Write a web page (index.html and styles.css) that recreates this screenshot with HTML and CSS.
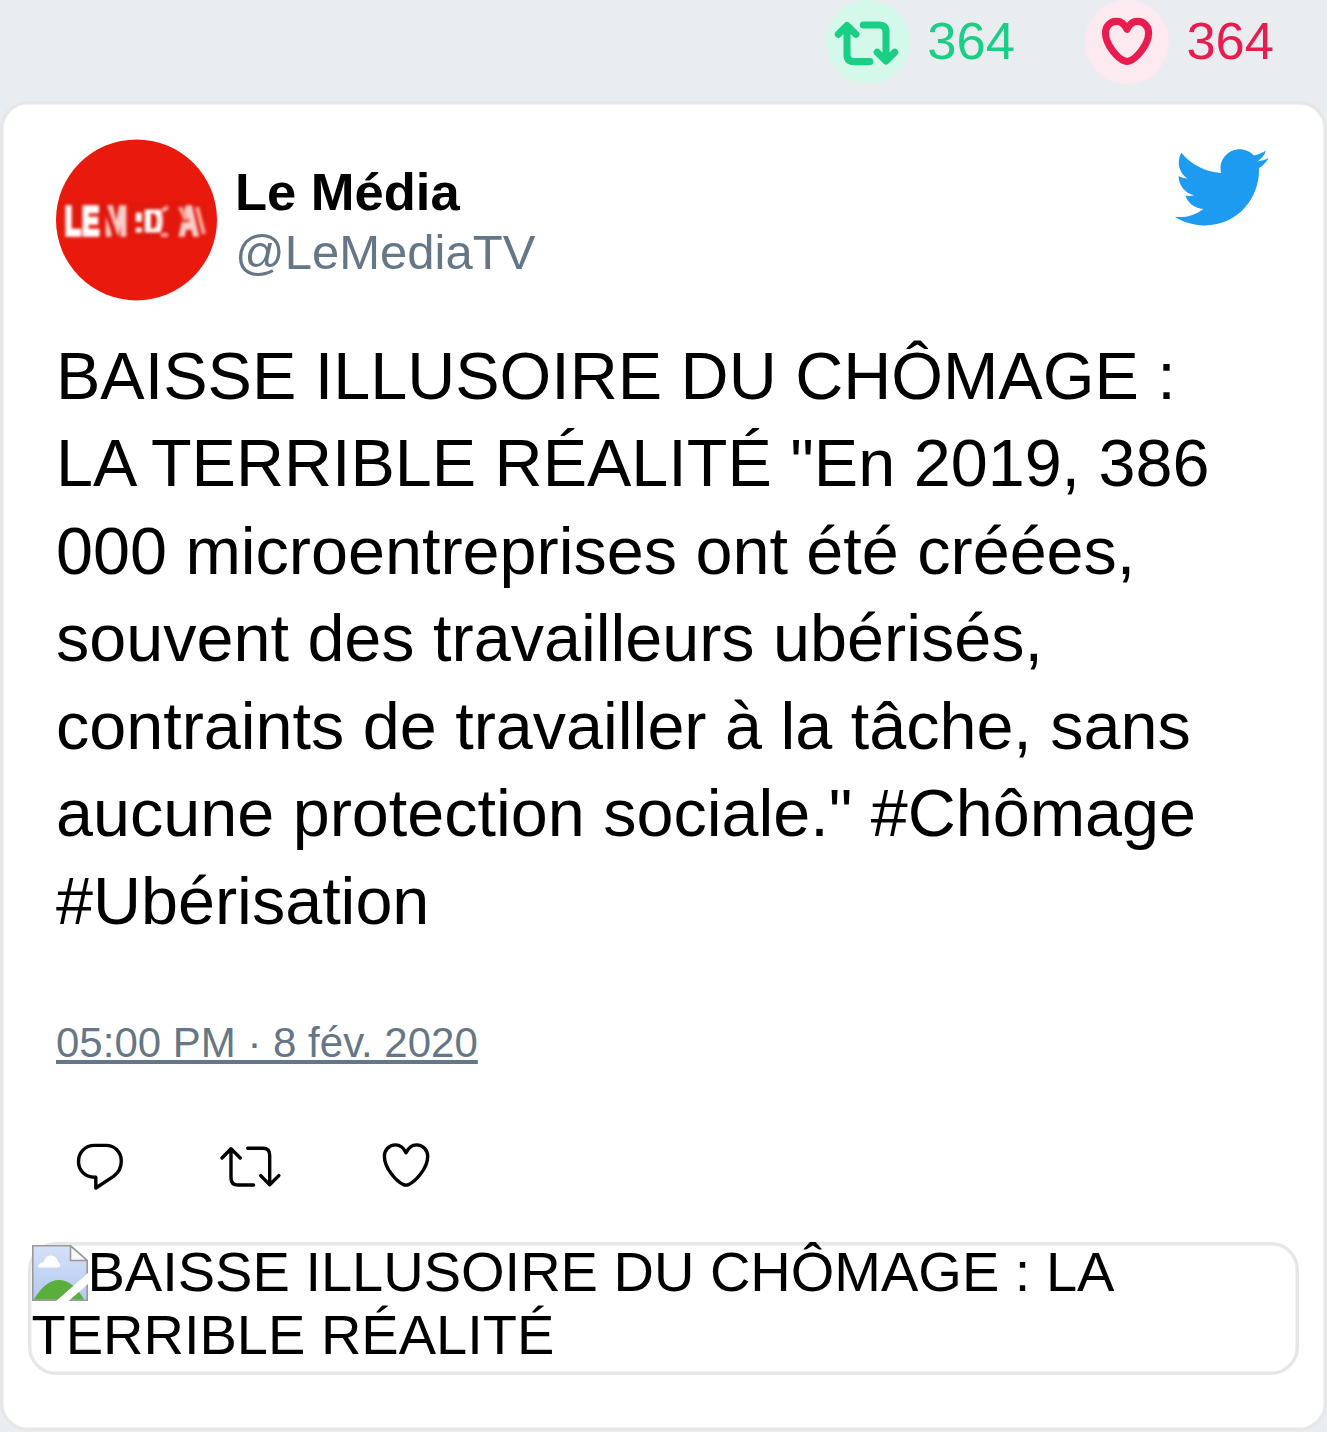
FILE: index.html
```html
<!DOCTYPE html>
<html lang="fr">
<head>
<meta charset="utf-8">
<title>Le Média</title>
<link rel="stylesheet" href="styles.css">
</head>
<body>
<div class="stats">
  <div class="stat stat-retweet">
    <span class="badge"><svg width="84" height="84" viewBox="826 0 84 84"><path d="M838.3 34.3L847 25.6L855.9 34.3M847 26V54.5Q847 61.6 854 61.6H869.8M863.3 25H879Q886 25 886 32V60M877.2 52.3L886 61L894.7 52.3"/></svg></span>
    <span>364</span>
  </div>
  <div class="stat stat-like">
    <span class="badge"><svg width="84" height="84" viewBox="1085 0 84 84"><path d="M1127 29.3C1124.5 24 1120.5 21.4 1116.5 21.4C1110 21.4 1105.5 26.5 1105.5 33C1105.5 45 1118 58.5 1124.5 60.9Q1127 61.8 1129.5 60.9C1136 58.5 1148.6 45 1148.6 33C1148.6 26.5 1144 21.4 1137.5 21.4C1133.5 21.4 1129.5 24 1127 29.3Z"/></svg></span>
    <span>364</span>
  </div>
</div>
<article class="card">
  <header class="head">
    <svg class="avatar" width="161" height="161" viewBox="56 139 161 161">
      <circle cx="136.5" cy="219.9" r="80.5" fill="#e9190d"/>
      <g class="logo">
        <rect x="64" y="202" width="142" height="37" fill="#d0170c" opacity=".3"/>
        <text transform="translate(65 235) scale(.65 1)" x="0 26 62 107 122 176">LEM:DA</text>
        <path class="cut" d="M104 204L116 238M134 235H160M143 207H160M178 202L186 222"/>
        <path class="glint" d="M180 207L186 220M197 207L204 234M162 211L168 207M161 235H168"/>
        <path class="tint" d="M104 204H130V238H104ZM160 204H206V238H160Z"/>
      </g>
    </svg>
    <div class="who">
      <div class="name">Le Média</div>
      <div class="handle">@LeMediaTV</div>
    </div>
    <svg class="bird" width="99" height="99" viewBox="0 0 24 24"><path d="M23.643 4.937c-.835.37-1.732.62-2.675.733.962-.576 1.7-1.49 2.048-2.578-.9.534-1.897.922-2.958 1.13-.85-.904-2.06-1.47-3.4-1.47-2.572 0-4.658 2.086-4.658 4.66 0 .364.042.718.12 1.06-3.873-.195-7.304-2.05-9.602-4.868-.4.69-.63 1.49-.63 2.342 0 1.616.823 3.043 2.072 3.878-.764-.025-1.482-.234-2.11-.583v.06c0 2.257 1.605 4.14 3.737 4.568-.392.106-.803.162-1.227.162-.3 0-.593-.028-.877-.082.593 1.85 2.313 3.198 4.352 3.234-1.595 1.25-3.604 1.995-5.786 1.995-.376 0-.747-.022-1.112-.065 2.062 1.323 4.51 2.093 7.14 2.093 8.57 0 13.255-7.098 13.255-13.254 0-.2-.005-.402-.014-.602.91-.658 1.7-1.477 2.323-2.41z"/></svg>
  </header>
  <p class="text">BAISSE ILLUSOIRE DU CHÔMAGE :<br>LA TERRIBLE RÉALITÉ "En 2019, 386<br>000 microentreprises ont été créées,<br>souvent des travailleurs ubérisés,<br>contraints de travailler à la tâche, sans<br>aucune protection sociale." #Chômage<br>#Ubérisation</p>
  <div class="date">05:00 PM · 8 fév. 2020</div>
  <div class="actions">
    <svg width="50" height="50" viewBox="75 1140 50 50"><path d="M94.5 1145.4H106C115 1145.4 121.3 1152.5 121.3 1161C121.3 1167 118.8 1172.6 113.5 1176.3L95.8 1188V1177.2H94.3C85 1177.2 78.5 1170.3 78.5 1161.4C78.5 1152.5 85 1145.4 94.5 1145.4Z"/></svg>
    <svg width="64" height="50" viewBox="219 1140 64 50"><path d="M222 1158L231 1148.7L240.2 1158M231 1149V1178Q231 1185 238 1185H253.5M247.7 1148.3H263Q269.7 1148.3 269.7 1155.3V1184M260.7 1175.6L269.7 1184.7L278.8 1175.6"/></svg>
    <svg width="50" height="50" viewBox="381 1140 50 50"><path d="M406 1152.8C403.5 1147.5 399.5 1144.9 395.5 1144.9C389 1144.9 384.4 1150 384.4 1156.5C384.4 1168.5 397 1182 403.5 1184.6Q406 1185.6 408.5 1184.6C415 1182 427.7 1168.5 427.7 1156.5C427.7 1150 423 1144.9 416.5 1144.9C412.5 1144.9 408.5 1147.5 406 1152.8Z"/></svg>
  </div>
  <div class="media"><div class="alt"><svg class="broken" width="56" height="56" viewBox="0 0 56 56">
      <defs><linearGradient id="sky" x2="0" y2="1"><stop offset="0" stop-color="#d5e1f8"/><stop offset="1" stop-color="#b3c9ef"/></linearGradient></defs>
      <path d="M.8.8H38.5L55.2 15.5V55.2H.8Z" fill="url(#sky)" stroke="#999" stroke-width="1.6"/>
      <path d="M6 22.5C6 19 9 17.2 11.5 17.2C13 12.5 16 10.5 19 10.5C23 10.5 25.5 13.5 26.2 17C29 18 28.5 22.5 26.5 22.5Z" fill="#fff"/>
      <path d="M2 54.4C9 42 18 35 27 35C36 35 45 42 52 54.4Z" fill="#5aae3b"/>
      <path d="M23 57L57 27V38L35.5 57Z" fill="#fff"/>
      <path d="M38.5.8V15.5H55.2Z" fill="#f8f8f8" stroke="#999" stroke-width="1.6"/>
    </svg>BAISSE ILLUSOIRE DU CHÔMAGE : LA<br>TERRIBLE RÉALITÉ</div></div>
</article>
</body>
</html>
```
FILE: styles.css
```css
* { box-sizing: border-box; }
body {
  margin: 0;
  height: 1432px;
  overflow: hidden;
  background: #e9edf0;
  color: #000;
  font-family: "Liberation Sans", Arial, sans-serif;
}
svg { display: block; flex: none; }
.stats {
  display: flex;
  justify-content: flex-end;
  gap: 70px;
  height: 101px;
  padding-right: 53px;
  font-size: 52.5px;
  line-height: 81px;
}
.stat { display: flex; gap: 17.5px; height: 83px; }
.badge { width: 84px; height: 84px; margin-top: -.5px; border-radius: 50%; }
.badge path { fill: none; stroke-width: 7.1; stroke-linecap: round; stroke-linejoin: round; }
.stat-retweet { color: #19cf86; }
.stat-retweet .badge { background: #d4f9ea; }
.stat-retweet path { stroke: #19cf86; }
.stat-like { color: #e81c4f; }
.stat-like .badge { background: #fdeaf0; }
.stat-like path { stroke: #e81c4f; }
.card {
  height: 1330px;
  border: 3px solid #e6e6e6;
  border-radius: 28px;
  box-shadow: inset 0 0 0 .5px #e6e6e6;
  background: #fff;
  padding: 35px 25px 0;
}
.head { display: flex; padding-left: 28px; height: 161px; }
.avatar { overflow: visible; }
.logo { font-size: 40px; font-weight: bold; fill: #fff; filter: blur(1.4px); }
.logo text { stroke: #fff; stroke-width: 3.5; }
.cut { fill: none; stroke: #dc180d; stroke-width: 5; }
.glint { fill: none; stroke: #ffd5c5; stroke-width: 4; }
.tint { fill: #e9190d; opacity: .22; }
.who { flex: 1; padding: 23px 0 0 18px; }
.name { font-size: 52.5px; font-weight: bold; line-height: 60px; }
.handle { font-size: 49px; line-height: 60px; color: #657786; }
.bird { margin: -1.3px 29px 0 0; fill: #1d9bf0; }
.text { margin: 32.9px 0 0 28px; font-size: 66.5px; line-height: 87.5px; white-space: nowrap; }
.date {
  width: max-content;
  margin: 73.6px 0 0 28px;
  font-size: 42px;
  line-height: 48px;
  color: #657786;
  text-decoration: underline;
  text-decoration-thickness: 3.5px;
  text-underline-offset: 3px;
}
.actions { display: flex; gap: 94px; margin: 73px 0 0 47px; height: 50px; }
.actions svg + svg + svg { margin-left: 4px; }
.actions path { fill: none; stroke: #000; stroke-width: 3.4; stroke-linecap: round; stroke-linejoin: round; }
.media {
  height: 133px;
  margin-top: 52px;
  border: 3px solid #e6e6e6;
  border-radius: 28px;
  box-shadow: inset 0 0 0 .5px #e6e6e6;
}
.alt { margin: -5px 0 0 .5px; font-size: 56px; line-height: 63px; white-space: nowrap; }
.broken { display: inline-block; vertical-align: -10px; }
```
